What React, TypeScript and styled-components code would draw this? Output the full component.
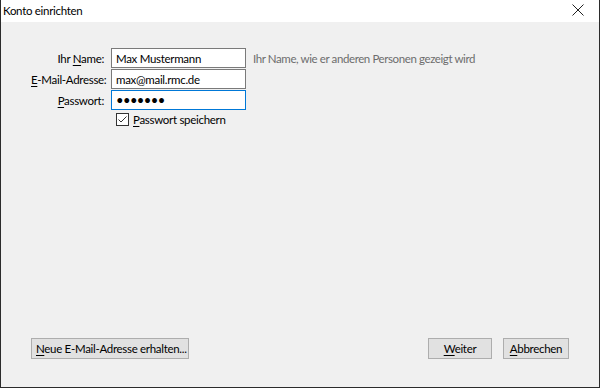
import React, {useState} from "react";
import styled, {createGlobalStyle} from "styled-components";

const GlobalStyle = createGlobalStyle`
    html, body {
        margin: 0;
        padding: 0;
        background: #ffffff;
    }
    body {
        font-family: Lato, "Noto Sans", sans-serif;
        font-size: 11.5px;
        letter-spacing: -0.3px;
        color: #000;
    }
`

const Window = styled.div`
    width: 600px;
    height: 388px;
    box-sizing: border-box;
    border: 1px solid #2b2b2b;
    border-top: none;
    display: flex;
    flex-direction: column;
    background: #f0f0f0;
`

const TitleBar = styled.div`
    height: 22px;
    flex-shrink: 0;
    background: #ffffff;
    display: flex;
    align-items: center;
    justify-content: space-between;
    padding: 0 0 2px 2px;
    box-sizing: border-box;
`

const Title = styled.span`
    color: #000;
`

const CloseBtn = styled.div`
    width: 44px;
    height: 20px;
    display: flex;
    align-items: center;
    justify-content: center;
    margin-right: -1px;
`

const Body = styled.div`
    flex: 1;
    display: flex;
    flex-direction: column;
    justify-content: space-between;
    padding: 26px 30px 28px 30px;
`

const Form = styled.div`
    display: grid;
    grid-template-columns: 73px 135px auto;
    column-gap: 7px;
    row-gap: 1px;
    align-items: center;
`

const Label = styled.label`
    text-align: right;
    white-space: nowrap;
`

const Key = styled.span`
    text-decoration: underline;
    text-underline-offset: 2px;
`

const Input = styled.input<{ $focused?: boolean }>`
    box-sizing: border-box;
    height: 20px;
    width: 135px;
    margin: 0;
    padding: 0 4px;
    font-family: inherit;
    font-size: ${props => props.type === 'password' ? '13px' : '11.5px'};
    background: #fff;
    color: #000;
    border: 1px solid ${props => props.$focused ? '#0078d7' : '#7a7a7a'};
    outline: none;
    letter-spacing: ${props => props.type === 'password' ? '-0.6px' : '-0.3px'};
`

const Hint = styled.span`
    color: #6d6d6d;
    letter-spacing: -0.4px;
    white-space: nowrap;
`

const CheckRow = styled.label`
    grid-column: 2 / 4;
    display: flex;
    align-items: center;
    gap: 4px;
    padding: 2px 0 0 5px;
`

const Box = styled.span`
    width: 13px;
    height: 13px;
    box-sizing: border-box;
    border: 1px solid #333;
    background: #fff;
    display: flex;
    align-items: center;
    justify-content: center;
`

const Footer = styled.div`
    display: flex;
    align-items: center;
    gap: 11px;
`

const Button = styled.button<{ $width: number }>`
    box-sizing: border-box;
    height: 21px;
    width: ${props => props.$width}px;
    margin: 0;
    padding: 0 4px;
    font-family: inherit;
    font-size: 11.5px;
    letter-spacing: -0.3px;
    color: #000;
    background: #e1e1e1;
    border: 1px solid #adadad;
    white-space: nowrap;
`

const Spacer = styled.div`
    flex: 1;
`

export default function App() {
    const [name, setName] = useState('Max Mustermann');
    const [mail, setMail] = useState('max@mail.rmc.de');
    const [pass, setPass] = useState('1234567');
    const [save, setSave] = useState(true);

    return <>
        <GlobalStyle/>
        <Window>
            <TitleBar>
                <Title>Konto einrichten</Title>
                <CloseBtn>
                    <svg width="12" height="12" viewBox="0 0 12 12">
                        <path d="M0.5 0.5 L11.5 11.5 M11.5 0.5 L0.5 11.5" stroke="#222" strokeWidth="1"/>
                    </svg>
                </CloseBtn>
            </TitleBar>
            <Body>
                <Form>
                    <Label>Ihr <Key>N</Key>ame:</Label>
                    <Input value={name} onChange={({target}) => setName(target.value)}/>
                    <Hint>Ihr Name, wie er anderen Personen gezeigt wird</Hint>

                    <Label><Key>E</Key>-Mail-Adresse:</Label>
                    <Input value={mail} onChange={({target}) => setMail(target.value)}/>
                    <span/>

                    <Label><Key>P</Key>asswort:</Label>
                    <Input type="password" $focused value={pass} onChange={({target}) => setPass(target.value)}/>
                    <span/>

                    <span/>
                    <CheckRow onClick={() => setSave(!save)}>
                        <Box>
                            {save && <svg width="11" height="11" viewBox="0 0 11 11">
                                <path d="M1.5 5.5 L4 8 L9.5 2.5" stroke="#333" strokeWidth="1" fill="none"/>
                            </svg>}
                        </Box>
                        <span><Key>P</Key>asswort speichern</span>
                    </CheckRow>
                </Form>
                <Footer>
                    <Button $width={158}><Key>N</Key>eue E-Mail-Adresse erhalten...</Button>
                    <Spacer/>
                    <Button $width={64}><Key>W</Key>eiter</Button>
                    <Button $width={66}><Key>A</Key>bbrechen</Button>
                </Footer>
            </Body>
        </Window>
    </>
}
